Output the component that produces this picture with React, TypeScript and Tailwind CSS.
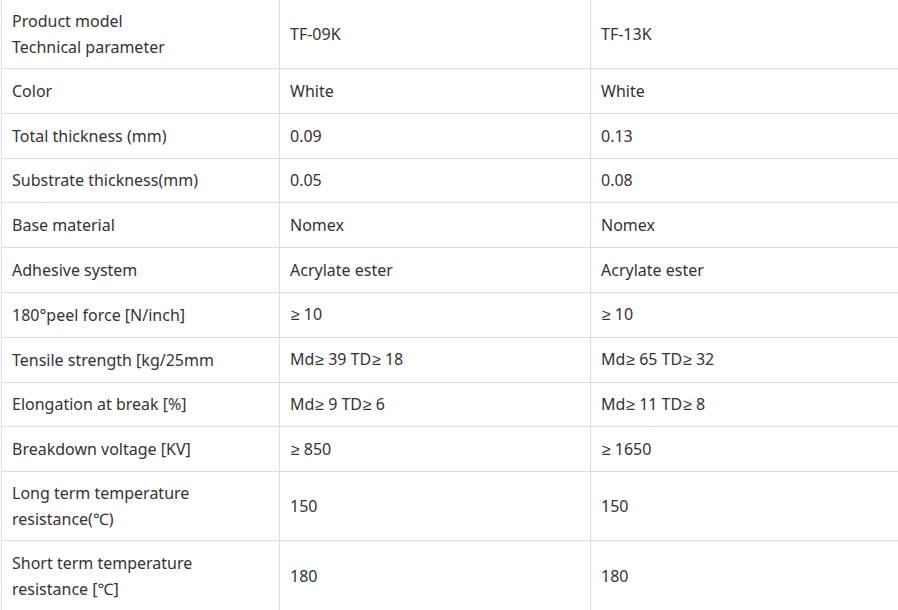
import React from "react";

const rows: [string, string, string][] = [
  ["Product model\nTechnical parameter", "TF-09K", "TF-13K"],
  ["Color", "White", "White"],
  ["Total thickness (mm)", "0.09", "0.13"],
  ["Substrate thickness(mm)", "0.05", "0.08"],
  ["Base material", "Nomex", "Nomex"],
  ["Adhesive system", "Acrylate ester", "Acrylate ester"],
  ["180°peel force [N/inch]", "≥10", "≥10"],
  ["Tensile strength [kg/25mm", "Md≥39 TD≥18", "Md≥65 TD≥32"],
  ["Elongation at break [%]", "Md≥9 TD≥6", "Md≥11 TD≥8"],
  ["Breakdown voltage [KV]", "≥850", "≥1650"],
  ["Long term temperature\nresistance(℃)", "150", "150"],
  ["Short term temperature\nresistance [℃]", "180", "180"],
];

// the ≥ sign comes from a different face in the original, narrow and flat-barred
function Cell({ text }: { text: string }) {
  const parts = text.split("≥");
  return (
    <>
      {parts.map((p, i) => (
        <React.Fragment key={i}>
          {i > 0 && (
            <span className="ml-[1px] mr-[4px]" style={{ fontFamily: '"Liberation Sans", sans-serif' }}>
              ≥
            </span>
          )}
          {p}
        </React.Fragment>
      ))}
    </>
  );
}

export default function App() {
  return (
    <div className="w-[898px] h-[610px] overflow-hidden bg-white">
      <table
        className="mt-[-1px] ml-[1px] w-[900px] table-fixed border-collapse text-[16px] leading-[26px] text-[#333]"
        style={{ fontFamily: '"Noto Sans", "Noto Sans CJK SC", sans-serif' }}
      >
        <colgroup>
          <col className="w-[278px]" />
          <col className="w-[311px]" />
          <col className="w-[311px]" />
        </colgroup>
        <tbody>
          {rows.map((r, i) => (
            <tr key={i}>
              {r.map((c, j) => (
                <td
                  key={j}
                  className={
                    "border border-[#dddddd] px-[10px] py-[8px] align-middle whitespace-pre-line " +
                    (i === rows.length - 1 ? "h-[72px] pt-[7px]" : "h-[44.8px]")
                  }
                >
                  <Cell text={c} />
                </td>
              ))}
            </tr>
          ))}
        </tbody>
      </table>
    </div>
  );
}
